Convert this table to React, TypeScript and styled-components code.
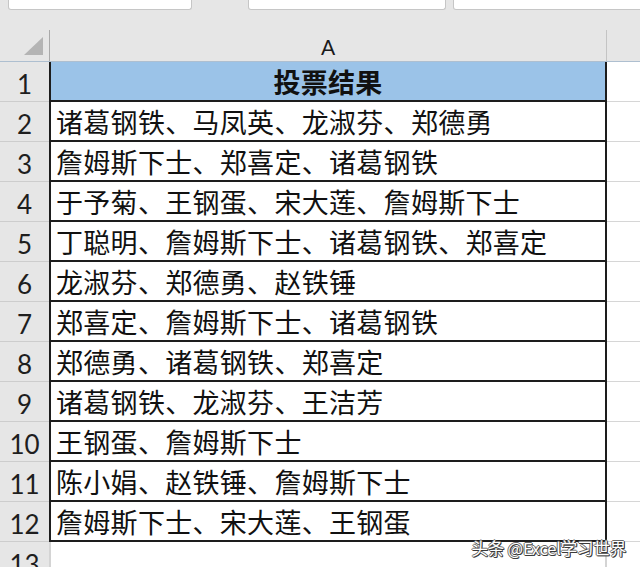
import React from 'react';
import styled, { createGlobalStyle } from 'styled-components';

const Global = createGlobalStyle`
  html, body { margin: 0; padding: 0; background: #e6e6e6; overflow: hidden; }
  body { width: 640px; height: 567px; font-family: "Noto Sans CJK SC", sans-serif; }
`;

const Page = styled.div`
  position: relative;
  width: 640px;
  height: 567px;
  overflow: hidden;
  background: #e6e6e6;
  display: flex;
  flex-direction: column;
`;

const TopBar = styled.div`
  height: 30px;
  flex-shrink: 0;
  display: flex;
  align-items: flex-start;
`;

const Field = styled.div<{ $w: number; $ml: number }>`
  width: ${p => p.$w}px;
  margin-left: ${p => p.$ml}px;
  flex-shrink: 0;
  height: 10px;
  box-sizing: border-box;
  background: #fff;
  border: 1px solid #c6c6c6;
  border-top: none;
  border-radius: 0 0 3px 3px;
`;

const HeaderRow = styled.div`
  height: 32px;
  flex-shrink: 0;
  display: flex;
  background: #e6e6e6;
  border-bottom: 1px solid #aebfd0;
  box-sizing: border-box;
`;

const Corner = styled.div`
  width: 50px;
  flex-shrink: 0;
  box-sizing: border-box;
  border-right: 1px solid #a9a9a9;
  display: flex;
  align-items: flex-end;
  justify-content: flex-end;
  padding: 0 6px 6px 0;
`;

const ColHeader = styled.div`
  width: 557px;
  flex-shrink: 0;
  box-sizing: border-box;
  border-right: 1px solid #c4c4c4;
  display: flex;
  align-items: flex-end;
  justify-content: center;
  padding-bottom: 1px;
  font-family: "Lato", "Liberation Sans", sans-serif;
  font-weight: 400;
  font-size: 21px;
  color: #1a1a1a;
  line-height: 26px;
`;

const Row = styled.div`
  height: 40px;
  flex-shrink: 0;
  display: flex;
`;

const RowNum = styled.div`
  width: 49px;
  flex-shrink: 0;
  box-sizing: border-box;
  background: #e6e6e6;
  border-bottom: 1px solid #cdcdcd;
  display: flex;
  align-items: flex-end;
  justify-content: center;
  font-family: "Lato", "Liberation Sans", sans-serif;
  font-size: 26px;
  line-height: 30px;
  padding-bottom: 2px;
  color: #1e1e1e;
`;

const Cell = styled.div<{ $head?: boolean; $plain?: boolean }>`
  width: 558px;
  flex-shrink: 0;
  box-sizing: border-box;
  background: ${p => (p.$head ? '#9BC3E8' : '#fff')};
  border-left: 2px solid ${p => (p.$plain ? '#d4d4d4' : '#1d1d1d')};
  border-right: 2px solid ${p => (p.$plain ? '#d4d4d4' : '#1d1d1d')};
  border-bottom: 2px solid ${p => (p.$plain ? '#d4d4d4' : '#1d1d1d')};
  display: flex;
  align-items: center;
  justify-content: ${p => (p.$head ? 'center' : 'flex-start')};
  padding-left: ${p => (p.$head ? 0 : 5)}px;
  font-family: "Noto Sans CJK SC", sans-serif;
  font-size: 27px;
  letter-spacing: 0.3px;
  font-weight: ${p => (p.$head ? 700 : 400)};
  color: #111;
  white-space: nowrap;
  overflow: hidden;
`;

const Extra = styled.div<{ $head?: boolean }>`
  flex: 1;
  background: ${p => (p.$head ? '#e6e6e6' : '#fff')};
  border-bottom: ${p => (p.$head ? 'none' : '1px solid #d6d6d6')};
  box-sizing: border-box;
`;

const Watermark = styled.div`
  position: absolute;
  right: 14px;
  bottom: 9px;
  font-family: "Noto Sans CJK SC", sans-serif;
  font-size: 16.5px;
  line-height: 20px;
  color: #fff;
  letter-spacing: -0.2px;
  text-shadow: 1px 1px 0 #3a3a3a, -1px 0 0 #6a6a6a, 0 -1px 0 #6a6a6a, 1px 0 0 #4a4a4a, 0 1px 0 #4a4a4a;
`;

const rows = [
  '诸葛钢铁、马凤英、龙淑芬、郑德勇',
  '詹姆斯下士、郑喜定、诸葛钢铁',
  '于予菊、王钢蛋、宋大莲、詹姆斯下士',
  '丁聪明、詹姆斯下士、诸葛钢铁、郑喜定',
  '龙淑芬、郑德勇、赵铁锤',
  '郑喜定、詹姆斯下士、诸葛钢铁',
  '郑德勇、诸葛钢铁、郑喜定',
  '诸葛钢铁、龙淑芬、王洁芳',
  '王钢蛋、詹姆斯下士',
  '陈小娟、赵铁锤、詹姆斯下士',
  '詹姆斯下士、宋大莲、王钢蛋',
];

export default function App() {
  return (
    <Page>
      <Global />
      <TopBar>
        <Field $w={184} $ml={8} />
        <Field $w={198} $ml={56} />
        <Field $w={200} $ml={7} />
      </TopBar>
      <HeaderRow>
        <Corner>
          <svg width="19" height="18" viewBox="0 0 19 18">
            <polygon points="19,0 19,18 0,18" fill="#b4b4b4" />
          </svg>
        </Corner>
        <ColHeader>A</ColHeader>
        <Extra $head />
      </HeaderRow>
      <Row>
        <RowNum>1</RowNum>
        <Cell $head>投票结果</Cell>
        <Extra />
      </Row>
      {rows.map((t, i) => (
        <Row key={i}>
          <RowNum>{i + 2}</RowNum>
          <Cell>{t}</Cell>
          <Extra />
        </Row>
      ))}
      <Row>
        <RowNum>13</RowNum>
        <Cell $plain />
        <Extra />
      </Row>
      <Watermark>头条 @Excel学习世界</Watermark>
    </Page>
  );
}
